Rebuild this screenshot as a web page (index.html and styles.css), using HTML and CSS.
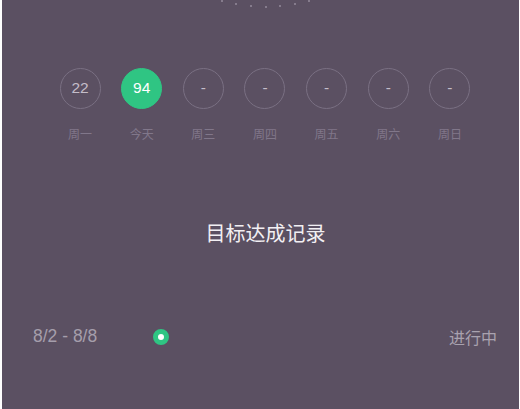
FILE: index.html
```html
<!DOCTYPE html>
<html lang="zh">
<head>
<meta charset="utf-8">
<link rel="stylesheet" href="styles.css">
</head>
<body>
<div class="screen">
  <div class="arc">
    <span class="dot d1"></span><span class="dot d2"></span><span class="dot d3"></span><span class="dot d4"></span><span class="dot d5"></span><span class="dot d6"></span><span class="dot d7"></span>
  </div>
  <div class="week">
    <div class="day"><div class="circle">22</div><div class="label">周一</div></div>
    <div class="day"><div class="circle today">94</div><div class="label">今天</div></div>
    <div class="day"><div class="circle">-</div><div class="label">周三</div></div>
    <div class="day"><div class="circle">-</div><div class="label">周四</div></div>
    <div class="day"><div class="circle">-</div><div class="label">周五</div></div>
    <div class="day"><div class="circle">-</div><div class="label">周六</div></div>
    <div class="day"><div class="circle">-</div><div class="label">周日</div></div>
  </div>
  <div class="title">目标达成记录</div>
  <div class="record">
    <span class="range">8/2 - 8/8</span>
    <span class="status-dot"></span>
    <span class="spacer"></span>
    <span class="state">进行中</span>
  </div>
</div>
</body>
</html>
```
FILE: styles.css
```css
html, body {
  margin: 0;
  padding: 0;
  width: 520px;
  height: 409px;
  overflow: hidden;
  background: #ffffff;
}
.screen {
  margin-left: 2px;
  width: 517px;
  height: 409px;
  background: #5b5062;
  position: relative;
  font-family: "Liberation Sans", "Noto Sans CJK SC", sans-serif;
}
.arc {
  position: absolute;
  left: 0;
  top: 0;
  width: 100%;
  height: 10px;
}
.dot {
  position: absolute;
  width: 2px;
  height: 2px;
  background: #857b8c;
}
.d1 { left: 219px; top: 0; }
.d2 { left: 233px; top: 3px; }
.d3 { left: 248px; top: 5px; }
.d4 { left: 263px; top: 6px; }
.d5 { left: 277px; top: 5px; }
.d6 { left: 292px; top: 3px; }
.d7 { left: 306px; top: 0; }
.week {
  display: flex;
  gap: 20.67px;
  padding-left: 57.5px;
  padding-top: 67.5px;
}
.day {
  display: flex;
  flex-direction: column;
  align-items: center;
  width: 41px;
}
.circle {
  box-sizing: border-box;
  width: 41px;
  height: 41px;
  border-radius: 50%;
  border: 1px solid #7a7083;
  display: flex;
  align-items: center;
  justify-content: center;
  color: #c4bdc9;
  font-size: 15.5px;
}
.circle.today {
  background: #2fc583;
  border-color: #2fc583;
  color: #ffffff;
}
.label {
  margin-top: 16px;
  font-family: "Noto Sans CJK SC", sans-serif;
  font-size: 12px;
  line-height: 17px;
  color: #81778a;
}
.title {
  margin-top: 77px;
  text-align: center;
  font-family: "Noto Sans CJK SC", sans-serif;
  font-size: 20px;
  line-height: 28px;
  color: #f2eff3;
  padding-left: 10px;
}
.record {
  display: flex;
  align-items: center;
  margin-top: 78px;
  padding-left: 31px;
  padding-right: 22px;
  height: 24px;
}
.range {
  font-size: 17.5px;
  color: #a59eab;
}
.status-dot {
  box-sizing: border-box;
  margin-left: 56px;
  width: 16px;
  height: 16px;
  border-radius: 50%;
  border: 5px solid #2fc583;
  background: #ffffff;
}
.spacer {
  flex: 1;
}
.state {
  font-family: "Noto Sans CJK SC", sans-serif;
  font-size: 16px;
  color: #a9a2af;
}
```
